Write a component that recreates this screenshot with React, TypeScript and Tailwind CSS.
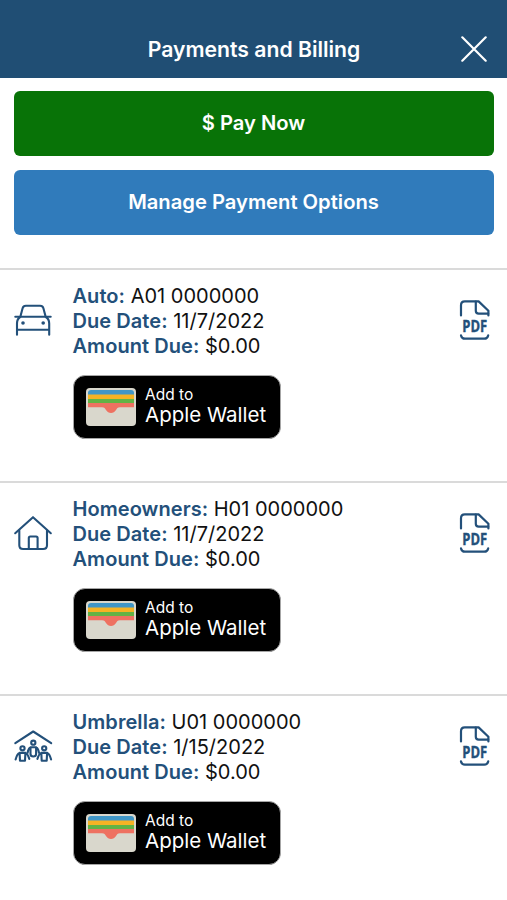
import type { ReactNode } from "react";

type Policy = {
  id: string;
  label: string;
  number: string;
  dueDate: string;
  amount: string;
  icon: ReactNode;
};

const iconClassName = "h-10 w-10 fill-none stroke-[#23507a] stroke-[2.1]";

function CarIcon() {
  return (
    <svg viewBox="0 0 40 40" className={iconClassName} strokeLinecap="round" strokeLinejoin="round">
      <path d="M2.3 16.7h35.400M7.400 16.500l2.200-8.200c.5-1.800 1.600-2.500 3.200-2.500h14.400c1.600 0 2.700.7 3.200 2.500l2.200 8.200" />
      <path d="M7.200 17c-2.200 1.300-3.200 3.300-3.200 6.500v11.200M32.800 17c2.200 1.300 3.400 3.300 3.400 6.500v11.200M4 29.800h32" />
      <circle cx="10" cy="23" r="1.8" className="fill-[#23507a] stroke-none" />
      <circle cx="30.2" cy="23" r="1.8" className="fill-[#23507a] stroke-none" />
    </svg>
  );
}

function HouseIcon() {
  return (
    <svg viewBox="0 0 40 40" className={iconClassName} strokeLinecap="round" strokeLinejoin="round">
      <path d="M2.200 20.200 20 4.200l17.800 16" />
      <path d="M6.300 17.500v14.700c0 2.300 1.500 3.800 3.800 3.800h20c2.300 0 3.900-1.500 3.900-3.800V17.500" />
      <path d="M15.800 36V25c0-.9.6-1.500 1.500-1.500h5.800c.9 0 1.500.6 1.500 1.500v11" />
    </svg>
  );
}

function FamilyIcon() {
  return (
    <svg viewBox="0 0 40 40" className={iconClassName} strokeLinecap="round" strokeLinejoin="round">
      <path d="M2.300 17.200 20.200 5.500l18 11.700" />
      <circle cx="20.3" cy="16.700" r="2.100" />
      <path d="M17.500 21.300h5.600v6.700c0 1.700-1 2.500-2.800 2.500s-2.800-.8-2.800-2.500ZM17.500 21.300c-1.600.5-2.400 3-2.900 5.400M23.100 21.300c1.600.5 2.400 3 2.900 5.400" />
      <circle cx="9.500" cy="22.300" r="2.100" />
      <path d="m6.600 26.900.4 7.900h5l.4-7.900ZM6.600 26.900c-1.900.6-3.300 3.800-4 6.600M12.400 26.900c1.900.6 3.200 3.500 3.900 6" />
      <circle cx="31.200" cy="22.300" r="2.100" />
      <path d="m28.300 26.900.4 7.900h5l.4-7.900ZM28.300 26.900c-1.900.6-3.200 3.500-3.900 6M34.100 26.900c1.900.6 3.300 3.800 4 6.600" />
    </svg>
  );
}

function PdfIcon() {
  return (
    <svg
      viewBox="0 0 30 40"
      className="h-10 w-[30px] overflow-visible fill-none stroke-[#23507a] stroke-[2.2]"
      strokeLinecap="round"
      strokeLinejoin="round"
    >
      <path d="M1 15.500V5.200c0-2.400 1.400-3.800 3.800-3.800h13.800l9.800 9.400v4.700" />
      <path d="M15.800 1.600v9.200c0 1.900 1 2.900 2.900 2.900h9.500" />
      <path d="M1 35.400c.5 2.300 1.800 3.300 3.900 3.300h19.400c2.100 0 3.400-1 3.900-3.300" />
      <text
        x="2.300"
        y="25.500"
        transform="scale(1 1.240)"
        className="fill-[#23507a] stroke-[#23507a] stroke-[0.3] font-['Open_Sans',sans-serif] text-[13px] font-bold"
      >
        PDF
      </text>
    </svg>
  );
}

function WalletIcon() {
  return (
    <svg viewBox="0 0 50 38" className="h-[38px] w-[50px]">
      <rect width="50" height="38" rx="4" fill="#d9d7cc" />
      <path d="M2 7V5q0-3 3-3h40q3 0 3 3v2Z" fill="#4096c6" />
      <rect x="2" y="6.500" width="46" height="5" fill="#f5b324" />
      <rect x="2" y="11" width="46" height="4.500" fill="#62b345" />
      <path d="M2 15h46v4.300H34c-2.600 0-3 1.300-4 2.800-1.200 2-3 3-5 3s-3.800-1-5-3c-1-1.500-1.400-2.800-4-2.800H2Z" fill="#ee7161" />
    </svg>
  );
}

const policies: Policy[] = [
  {
    id: "auto",
    label: "Auto",
    number: "A01 0000000",
    dueDate: "11/7/2022",
    amount: "$0.00",
    icon: <CarIcon />,
  },
  {
    id: "home",
    label: "Homeowners",
    number: "H01 0000000",
    dueDate: "11/7/2022",
    amount: "$0.00",
    icon: <HouseIcon />,
  },
  {
    id: "umbrella",
    label: "Umbrella",
    number: "U01 0000000",
    dueDate: "1/15/2022",
    amount: "$0.00",
    icon: <FamilyIcon />,
  },
];

function DetailLine({ label, value }: { label: string; value: string }) {
  return (
    <p className="whitespace-nowrap">
      <span className="font-semibold tracking-[0.06px] text-[#23507a]">{label}:</span> {value}
    </p>
  );
}

function PolicyRow({ policy }: { policy: Policy }) {
  return (
    <li className="flex h-[213px] border-t-2 border-[#dadada] pl-[13px] pr-[17px]">
      <div className="w-[59.5px] pt-[30px]">{policy.icon}</div>
      <div className="flex-1 pt-[14px]">
        <div className="text-[20px] leading-[25px] text-[#111]">
          <DetailLine label={policy.label} value={policy.number} />
          <DetailLine label="Due Date" value={policy.dueDate} />
          <DetailLine label="Amount Due" value={policy.amount} />
        </div>
        <button
          type="button"
          className="mt-4 flex h-16 w-[208px] items-center rounded-xl border border-[#a6a6a6] bg-black pl-[12.5px] text-left text-white"
        >
          <WalletIcon />
          <span className="-mt-[3px] ml-[9px] flex flex-col whitespace-nowrap">
            <span className="text-[15.5px] leading-[18px]">Add to</span>
            <span className="text-[20.5px] leading-[22px]">Apple Wallet</span>
          </span>
        </button>
      </div>
      <button type="button" aria-label="Open PDF" className="self-start pt-[30px]">
        <PdfIcon />
      </button>
    </li>
  );
}

export default function App() {
  return (
    <main className="h-[900px] w-full overflow-hidden bg-white font-['Inter',sans-serif]">
      <header className="flex h-[78px] items-center bg-[#204e74] pl-[47px] pr-5 pt-5 text-white">
        <h1 className="flex-1 pt-[2px] text-center text-[21.2px] font-semibold">Payments and Billing</h1>
        <button type="button" aria-label="Close">
          <svg viewBox="0 0 26 26" className="h-[26px] w-[26px] stroke-white stroke-[2.2]" strokeLinecap="round">
            <path d="M1.300 1.300 24.700 24.700M24.700 1.300 1.300 24.700" />
          </svg>
        </button>
      </header>

      <div className="flex h-[190px] flex-col gap-[14px] px-[13.5px] pt-[12.5px] text-[20.2px] font-semibold text-white">
        <button type="button" className="h-[65px] rounded-md bg-[#087307]">
          $ Pay Now
        </button>
        <button type="button" className="h-[65px] rounded-md bg-[#307bbb]">
          Manage Payment Options
        </button>
      </div>

      <ul>
        {policies.map((policy) => (
          <PolicyRow key={policy.id} policy={policy} />
        ))}
      </ul>
    </main>
  );
}
